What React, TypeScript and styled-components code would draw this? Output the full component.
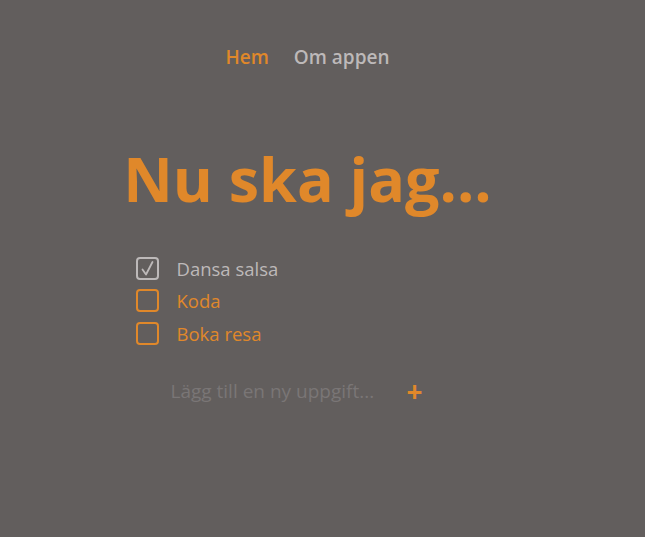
import React, { useState } from 'react';
import styled, { createGlobalStyle } from 'styled-components';

const GlobalStyle = createGlobalStyle`
  body {
    margin: 0;
    background: #625e5d;
    font-family: 'Open Sans', 'Noto Sans', sans-serif;
  }
`;

const Page = styled.div`
  display: flex;
  flex-direction: column;
  align-items: center;
  padding: 0 30px 0 0;
  min-height: 537px;
  box-sizing: border-box;
`;

const Nav = styled.nav`
  display: flex;
  gap: 25px;
  margin-top: 44px;
`;

const NavLink = styled.a<{ $active?: boolean }>`
  font-size: 19px;
  font-weight: 600;
  color: ${(p) => (p.$active ? '#e0882a' : '#bdb9b9')};
  text-decoration: none;
  cursor: pointer;
`;

const Title = styled.h1`
  margin: 72px 0 0;
  font-size: 61px;
  font-weight: 700;
  line-height: 1.2;
  color: #e0882a;
`;

const Tasks = styled.div`
  width: 344px;
  display: flex;
  flex-direction: column;
  margin-top: 37px;
`;

const Task = styled.label<{ $done?: boolean }>`
  display: flex;
  align-items: center;
  gap: 18px;
  height: 32.5px;
  font-size: 18.5px;
  color: ${(p) => (p.$done ? '#bdb9b9' : '#e0882a')};
  cursor: pointer;
`;

const Box = styled.span<{ $done?: boolean }>`
  width: 19px;
  height: 19px;
  border: 2px solid ${(p) => (p.$done ? '#bdb9b9' : '#e0882a')};
  border-radius: 4px;
  display: flex;
  align-items: center;
  justify-content: center;
`;

const AddRow = styled.div`
  width: 342px;
  display: flex;
  align-items: center;
  margin-top: 27px;
  padding-left: 34px;
  box-sizing: border-box;
`;

const Input = styled.input`
  width: 226px;
  background: transparent;
  border: none;
  outline: none;
  font-family: inherit;
  font-size: 19px;
  color: #bdb9b9;
  padding: 0;
  &::placeholder {
    color: #7a7676;
  }
`;

const AddButton = styled.button`
  background: none;
  border: none;
  color: #e0882a;
  font-size: 28px;
  font-weight: 700;
  padding: 0;
  margin-left: 10px;
  line-height: 1;
  cursor: pointer;
  font-family: inherit;
`;

type Item = { text: string; done: boolean };

const Check = () => (
  <svg width="19" height="19" viewBox="0 0 19 19">
    <path
      d="M4.5 10.5 L8 15.5 L14.5 3"
      fill="none"
      stroke="#bdb9b9"
      strokeWidth="1.8"
      strokeLinecap="round"
      strokeLinejoin="round"
    />
  </svg>
);

export default function App() {
  const [items, setItems] = useState<Item[]>([
    { text: 'Dansa salsa', done: true },
    { text: 'Koda', done: false },
    { text: 'Boka resa', done: false },
  ]);
  const [value, setValue] = useState('');

  const toggle = (i: number) => {
    setItems(items.map((it, j) => (j === i ? { ...it, done: !it.done } : it)));
  };

  const add = () => {
    if (!value.trim()) return;
    setItems([...items, { text: value, done: false }]);
    setValue('');
  };

  return (
    <Page>
      <GlobalStyle />
      <Nav>
        <NavLink $active>Hem</NavLink>
        <NavLink>Om appen</NavLink>
      </Nav>
      <Title>Nu ska jag...</Title>
      <Tasks>
        {items.map((it, i) => (
          <Task key={i} $done={it.done} onClick={() => toggle(i)}>
            <Box $done={it.done}>{it.done && <Check />}</Box>
            {it.text}
          </Task>
        ))}
      </Tasks>
      <AddRow>
        <Input
          placeholder="Lägg till en ny uppgift..."
          value={value}
          onChange={(e) => setValue(e.target.value)}
        />
        <AddButton onClick={add}>+</AddButton>
      </AddRow>
    </Page>
  );
}
